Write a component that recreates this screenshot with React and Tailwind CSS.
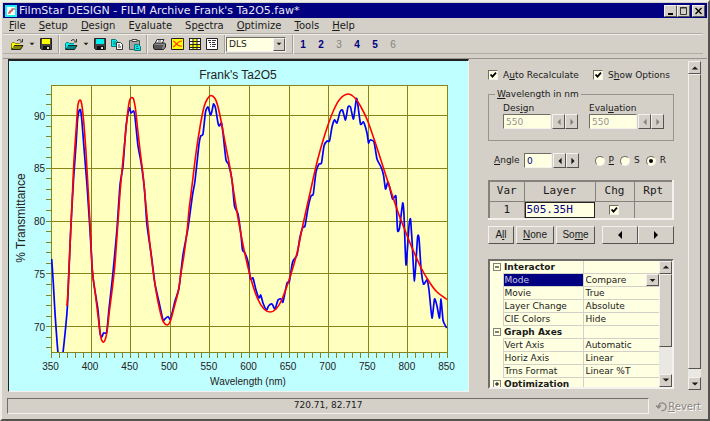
import React, { useState } from 'react';

const raised = 'border border-t-[#f4f2ee] border-l-[#f4f2ee] border-b-[#55534f] border-r-[#55534f] bg-[#d4d0c8]';
const sunken = 'border border-t-[#6f6d69] border-l-[#6f6d69] border-b-[#f4f2ee] border-r-[#f4f2ee]';

// Label with its accelerator letter underlined
const Hot = ({ text, at }) => (
  <span>
    {text.slice(0, at)}
    <span className="underline underline-offset-1">{text[at]}</span>
    {text.slice(at + 1)}
  </span>
);

const arrows = {
  left: 'M7 1v8L3 5z',
  right: 'M3 1v8l4-4z',
  up: 'M1 7h8L5 3z',
  down: 'M1 3h8L5 7z',
};

const Arrow = ({ dir, className = 'h-2 w-2' }) => (
  <svg viewBox="0 0 10 10" className={className} fill="currentColor" aria-hidden="true">
    <path d={arrows[dir]} />
  </svg>
);

const menus = [
  ['File', 0],
  ['Setup', 0],
  ['Design', 0],
  ['Evaluate', 1],
  ['Spectra', 2],
  ['Optimize', 0],
  ['Tools', 0],
  ['Help', 0],
];

const OpenIcon = ({ color, shade }) => (
  <svg viewBox="0 0 14 13" className="h-[13px] w-[14px]" aria-hidden="true">
    <path d="M1.500 11V5.500l1-1h2l1 1h4V8" fill={color} stroke={shade} />
    <path d="M1.500 11.500L4 7.500h9l-2.500 4z" fill={shade} stroke="#222" />
    <path d="M2.500 10L4 6.500h6" fill="none" stroke={color} />
    <path d="M7 3c1-1.800 3-1.800 4.500 0M12.500 1v3H10" fill="none" stroke="#333" />
  </svg>
);

const SaveIcon = ({ color }) => (
  <svg viewBox="0 0 12 12" className="h-3 w-3" aria-hidden="true">
    <path d="M.5.500h11v11h-10l-1-1z" fill="#444" stroke="#222" />
    <path d="M2 1h8v5H2z" fill={color} />
    <path d="M3 8h7v4H3z" fill="#111" />
    <path d="M7 9h2v2H7z" fill="#ddd" />
  </svg>
);

const CopyIcon = () => (
  <svg viewBox="0 0 14 12" className="h-3 w-[14px]" aria-hidden="true">
    <path d="M1.500 1.500h4l2 2v5h-6z" fill="#0ee" stroke="#177" />
    <path d="M3 4h3M3 6h3" stroke="#177" />
    <path d="M6.500 4.500h4l2 2v5h-6z" fill="#fff" stroke="#333" />
    <path d="M8 7h2M8 9h3" stroke="#333" />
  </svg>
);

const PasteIcon = () => (
  <svg viewBox="0 0 14 13" className="h-[13px] w-[14px]" aria-hidden="true">
    <path d="M1.500 2.500h10v9h-10z" fill="#a8a6a0" stroke="#455" />
    <path d="M4 1.500h5v2H4z" fill="#eee" stroke="#444" />
    <path d="M6.500 6.500h4l2 2v4h-6z" fill="#0ee" stroke="#177" />
    <path d="M8 8.500h2M8 10.500h3" stroke="#177" />
  </svg>
);

const PrintIcon = () => (
  <svg viewBox="0 0 14 13" className="h-[13px] w-[14px]" aria-hidden="true">
    <path d="M5 1.500h7l-2 4H3z" fill="#fff" stroke="#333" />
    <path d="M1.500 6.500l2-1.500h9l1 1v3l-2 2.500h-9l-1-1.500z" fill="#888" stroke="#222" />
    <path d="M2 8h9M2 10h8" stroke="#222" />
    <path d="M6 3h3" stroke="#555" />
  </svg>
);

const GraphIcon = () => (
  <svg viewBox="0 0 13 12" className="h-3 w-[13px]" aria-hidden="true">
    <path d="M.5.500h12v11H.5z" fill="#ff0" stroke="#222" />
    <path d="M2 3c3 0 3 6 9 5M2 9c3-1 4-6 9-6" fill="none" stroke="#f40" strokeWidth="1.200" />
  </svg>
);

const GridIcon = () => (
  <svg viewBox="0 0 12 12" className="h-3 w-3" aria-hidden="true">
    <path d="M.5.500h11v11H.5z" fill="#fff" stroke="#222" />
    <path d="M4 0h4v12H4zM0 6h12v4H0z" fill="#ff0" />
    <path d="M.5 0v12M11.500 0v12M4 0v12M8 0v12M0 .5h12M0 3.500h12M0 6.500h12M0 9.500h12M0 11.500h12" stroke="#222" />
  </svg>
);

const ReportIcon = () => (
  <svg viewBox="0 0 12 12" className="h-3 w-3" aria-hidden="true">
    <path d="M.5.500h11v11H.5z" fill="#fff" stroke="#222" />
    <path d="M2 2.500h3M6 2.500h4M3 4.500h2M6 4.500h3M4 6.500h1M6 6.500h4M4 8.500h1M6 8.500h3" stroke="#333" />
  </svg>
);

const ToolButton = ({ label, className = '', children }) => (
  <button type="button" aria-label={label} className={`flex items-center justify-center ${className}`}>
    {children}
  </button>
);

const Divider = () => <div className="h-[19px] w-0.5 border-l border-[#a5a29c] border-r border-r-[#efede8]" />;

const Spinner = ({ name }) => (
  <div className="ml-px flex">
    <button type="button" aria-label={`Decrease ${name}`} className={`${raised} flex h-[15px] w-[13px] items-center justify-center disabled:text-[#85827c]`} disabled={name !== 'angle'}>
      <Arrow dir="left" />
    </button>
    <button type="button" aria-label={`Increase ${name}`} className={`${raised} flex h-[15px] w-[13px] items-center justify-center disabled:text-[#85827c]`} disabled={name !== 'angle'}>
      <Arrow dir="right" />
    </button>
  </div>
);

const CheckBox = ({ label, ...props }) => (
  <span className="relative flex h-[10px] w-[10px]">
    <input
      type="checkbox"
      aria-label={label}
      defaultChecked
      className={`${sunken} peer h-[10px] w-[10px] appearance-none bg-[#ffffe1]`}
      {...props}
    />
    <svg viewBox="0 0 10 10" className="pointer-events-none absolute inset-0 hidden h-[10px] w-[10px] peer-checked:block" aria-hidden="true">
      <path d="M2.500 4.500l2 2.200 3.500-4" fill="none" stroke="#000" strokeWidth="1.800" />
    </svg>
  </span>
);

const calculated = [
  [67, 306], [68, 290], [71, 225], [72.7, 188], [74, 160], [76.3, 127], [77.7, 107], [79, 101], [80, 100],
  [81, 101], [82.3, 108], [84, 125], [86, 152], [88, 187], [90.3, 229], [92.3, 270], [95, 291], [98.5, 320],
  [101, 338], [103, 342], [105, 340], [107, 332], [109.3, 312], [112, 291], [114.7, 267],
  [117.5, 229], [120, 193], [123, 160], [125.7, 132], [128, 110], [129.7, 100], [131.7, 97.5], [133.5, 99],
  [135.5, 109], [137, 123], [140, 150], [143.3, 177], [145.7, 203], [148.3, 229], [151.7, 260], [154.3, 280],
  [157.3, 298], [161, 315], [163.5, 322], [167, 325], [170, 322], [174, 308], [178.3, 291],
  [181, 273], [184, 255], [187.3, 229], [189, 210], [192.7, 180], [196, 153], [200, 127], [204, 107],
  [207.3, 99], [211, 95.5], [215, 98.5], [217.5, 105], [220.7, 119], [225, 142], [230, 168], [235.3, 202],
  [240, 229], [244.3, 251], [250.7, 278], [257.3, 298], [264, 309], [270.3, 312], [276, 309], [281.7, 300],
  [290, 277], [297.3, 252], [302, 229], [310, 193], [317.3, 161], [325, 134], [333.3, 111], [340, 99],
  [348, 94], [355, 98], [361, 107], [367.7, 121], [376.7, 147], [388.3, 183], [398.3, 213], [404.5, 229],
  [411.7, 247], [421.7, 269], [430, 283], [437, 292], [447, 299.5],
];

const measured = [
  [51.7, 259], [53.3, 283], [55, 313], [57.3, 345], [59, 360], [62, 360], [65.7, 327], [67.5, 305], [69, 270],
  [70.7, 230], [73.5, 180], [76, 145], [77.5, 120], [79, 111], [80.5, 110], [82, 122], [84, 148], [87, 185],
  [90, 230], [92.3, 270], [94, 285], [98, 310], [100, 333], [102, 337], [103.5, 333], [106.7, 332], [109, 309],
  [112, 282], [114, 262], [117, 229], [120, 185], [123, 166], [126, 127], [129.3, 108], [131, 113], [133.7, 111],
  [135, 117], [138, 146], [141, 162], [144.5, 190], [147, 225], [151.7, 258], [155, 284], [159, 302], [163, 320],
  [165, 319], [168, 316.5], [170.5, 319], [175, 301], [179, 288], [183, 255], [188, 228], [192.5, 195],
  [195, 181], [199, 144], [200.7, 136], [203, 134], [205.5, 112], [208, 107], [210.5, 115], [212, 111],
  [213.5, 104], [215.5, 108], [218, 123], [219.5, 126], [221.5, 123], [223, 133], [226, 160], [228.5, 164],
  [232, 180], [234.5, 206], [238, 214], [241, 235], [242.5, 250], [245, 253], [248, 262], [250.5, 279],
  [253, 278], [256, 290], [259, 298], [260.7, 295], [263, 303], [266.5, 310], [268.5, 306], [272, 304],
  [275, 309], [278, 300], [281, 299], [283, 302], [287, 283], [289.3, 282], [292, 265], [293.5, 260],
  [297, 255], [300, 237], [303, 227], [305, 226], [308, 208], [311, 196], [313.3, 194], [316, 172],
  [319, 164], [321.5, 163], [324, 146], [327, 141], [329.5, 141], [332, 127], [334.5, 120], [337, 123],
  [340, 112], [342.5, 110], [345.5, 120], [348, 107], [350.5, 107], [353.5, 119], [356.3, 99], [357.5, 102],
  [360.5, 124], [363.5, 122], [367, 133], [368.5, 143], [370, 140], [374, 142], [377, 159], [381, 167],
  [383.5, 175], [385.5, 189], [388, 182], [391, 193], [392.5, 199], [394.5, 197], [396, 197], [397.5, 230],
  [399.5, 228], [402.7, 203], [404, 215], [406, 265], [409, 226], [410.5, 219], [412, 240], [414.5, 281],
  [417.5, 238], [419, 238], [421, 268], [423.5, 284], [427, 280], [429, 290], [432, 318], [434.5, 299],
  [437, 306], [439.5, 318], [441, 299], [443, 320], [445, 325], [446.7, 328],
];

// Smooth path through all points; higher tension gives rounder bends
const toPath = (data, tension) => {
  let d = `M${data[0]}`;
  for (let i = 0; i < data.length - 1; i++) {
    const p0 = data[i - 1] || data[i];
    const p1 = data[i];
    const p2 = data[i + 1];
    const p3 = data[i + 2] || p2;
    d += `C${p1[0] + (p2[0] - p0[0]) * tension},${p1[1] + (p2[1] - p0[1]) * tension}`;
    d += ` ${p2[0] - (p3[0] - p1[0]) * tension},${p2[1] - (p3[1] - p1[1]) * tension} ${p2[0]},${p2[1]}`;
  }
  return d;
};

const Chart = () => {
  const px = (nm) => 51.5 + (nm - 350) * 0.792;
  const py = (t) => 115.5 + (90 - t) * 10.56;
  const wavelengths = Array.from({ length: 11 }, (_, i) => 350 + i * 50);
  const xTicks = Array.from({ length: 51 }, (_, i) => 350 + i * 10);
  const yTicks = Array.from({ length: 25 }, (_, i) => 68 + i);

  return (
    <svg viewBox="9 61 459 330" className="h-full w-full" role="img" aria-label="Frank's Ta2O5" fontFamily="'Liberation Sans', sans-serif" fill="#222">
      <clipPath id="plot">
        <rect x="51" y="85" width="397" height="267" />
      </clipPath>
      <rect x="51.500" y="85.500" width="396" height="267" fill="#ffffc0" />
      <g stroke="#85851a" strokeWidth="1" shapeRendering="crispEdges">
        {wavelengths.map((nm) => (
          <line key={nm} x1={px(nm)} x2={px(nm)} y1="85" y2="358" />
        ))}
        {[90, 85, 80, 75, 70].map((t) => (
          <line key={t} x1="46" x2="447.500" y1={py(t)} y2={py(t)} />
        ))}
        {xTicks.map((nm) => (
          <line key={nm} x1={px(nm)} x2={px(nm)} y1="353" y2="358" />
        ))}
        {yTicks.map((t) => (
          <line key={t} x1="46" x2="51" y1={py(t)} y2={py(t)} />
        ))}
        <rect x="51.500" y="85.500" width="396" height="267" fill="none" />
      </g>
      <g clipPath="url(#plot)" fill="none" strokeLinejoin="round">
        <path d={toPath(measured, 0.1)} stroke="#0000ff" strokeWidth="1.700" />
        <path d={toPath(calculated, 0.16)} stroke="#ff0000" strokeWidth="1.600" />
      </g>
      <text x="238" y="79" fontSize="12" textAnchor="middle">Frank's Ta2O5</text>
      {wavelengths.map((nm) => (
        <text key={nm} x={px(nm) - 1} y="370" fontSize="10" textAnchor="middle">{nm}</text>
      ))}
      {[90, 85, 80, 75, 70].map((t) => (
        <text key={t} x="45" y={py(t) + 4} fontSize="10" textAnchor="end">{t}</text>
      ))}
      <text x="248" y="385" fontSize="10" textAnchor="middle">Wavelength (nm)</text>
      <text transform="translate(25 218) rotate(-90)" fontSize="12" textAnchor="middle">% Transmittance</text>
    </svg>
  );
};

const properties = [
  { name: 'Interactor', group: '−' },
  { name: 'Mode', value: 'Compare', selected: true },
  { name: 'Movie', value: 'True' },
  { name: 'Layer Change', value: 'Absolute' },
  { name: 'CIE Colors', value: 'Hide' },
  { name: 'Graph Axes', group: '−' },
  { name: 'Vert Axis', value: 'Automatic' },
  { name: 'Horiz Axis', value: 'Linear' },
  { name: 'Trns Format', value: 'Linear %T' },
  { name: 'Optimization', group: '+' },
];

const PropertyGrid = () => (
  <div className={`${sunken} flex h-[130px] overflow-hidden border-2 bg-[#ffffe1]`}>
    <table className="w-full table-fixed border-collapse self-start">
      <colgroup>
        <col className="w-[13px]" />
        <col className="w-[80px]" />
        <col />
      </colgroup>
      <tbody>
        {properties.map((p) => (
          <tr key={p.name} className="h-[13px]">
            <td className="p-0">
              {p.group && (
                <button type="button" aria-label={`Toggle ${p.name}`} className="mx-auto flex h-2 w-2 items-center justify-center border border-[#85827c]">
                  <svg viewBox="0 0 6 6" className="h-1.5 w-1.5" aria-hidden="true">
                    <path d={p.group === '+' ? 'M1 3h4M3 1v4' : 'M1 3h4'} stroke="#000" />
                  </svg>
                </button>
              )}
            </td>
            <th
              scope="row"
              className={`border border-t-0 border-[#d4d0c8] p-0 pl-px text-left leading-3 whitespace-nowrap ${p.group ? 'border-l-0 font-bold' : 'font-normal'} ${p.selected ? 'bg-[#000080] text-[#c8c8e0]' : ''}`}
            >
              {p.name}
            </th>
            <td className="border-b border-[#d4d0c8] p-0 pl-0.5 leading-3 whitespace-nowrap">
              {p.selected ? (
                <div className="relative flex h-3">
                  <select aria-label={p.name} className="w-full appearance-none leading-3">
                    <option>{p.value}</option>
                  </select>
                  <span className={`${raised} pointer-events-none absolute inset-y-0 right-0 flex w-[13px] items-center justify-center`}>
                    <Arrow dir="down" className="h-[7px] w-[7px]" />
                  </span>
                </div>
              ) : (
                p.value
              )}
            </td>
          </tr>
        ))}
      </tbody>
    </table>
    <div className="flex w-[13px] shrink-0 flex-col bg-[#eae8e3]">
      <button type="button" aria-label="Scroll up" className={`${raised} flex h-[13px] items-center justify-center`}>
        <Arrow dir="up" />
      </button>
      <div className={`${raised} h-[73px]`} />
      <button type="button" aria-label="Scroll down" className={`${raised} mt-auto flex h-[13px] items-center justify-center`}>
        <Arrow dir="down" />
      </button>
    </div>
  </div>
);

const Controls = () => {
  const [polarization, setPolarization] = useState('R');

  return (
    <div className="flex w-[186px] shrink-0 flex-col pt-2.5 text-[9px]">
      <div className="flex justify-between pr-1">
        <label className="flex items-center gap-[5px] leading-3">
          <CheckBox />
          <Hot text="Auto Recalculate" at={1} />
        </label>
        <label className="flex items-center gap-[5px] leading-3">
          <CheckBox />
          <Hot text="Show Options" at={1} />
        </label>
      </div>

      <fieldset className="mt-[7px] flex gap-[11px] border border-[#97948e] pt-0.5 pr-2 pb-[11px] pl-3.5">
        <legend className="-ml-2 px-0.5 leading-3">
          <Hot text="Wavelength in nm" at={0} />
        </legend>
        {[['Design', 3], ['Evaluation', 4]].map(([name, at]) => (
          <div key={name}>
            <label htmlFor={name} className="block leading-3">
              <Hot text={name} at={at} />
            </label>
            <div className="flex">
              <input id={name} defaultValue="550" disabled className={`${sunken} h-[15px] w-12 bg-[#ffffe1] px-0.5 text-[#97948e]`} />
              <Spinner name={name} />
            </div>
          </div>
        ))}
      </fieldset>

      <div className="mt-3 flex items-center pl-1.5">
        <label htmlFor="angle" className="w-[30px]">
          <Hot text="Angle" at={0} />
        </label>
        <input id="angle" defaultValue="0" className={`${sunken} h-[15px] w-7 bg-[#ffffe1] px-0.5 text-[#000080]`} />
        <Spinner name="angle" />
        <div className="ml-auto flex gap-1.5 pr-2">
          {['P', 'S', 'R'].map((p) => (
            <label key={p} className="flex items-center gap-1">
              <span className="relative flex">
                <input
                  type="radio"
                  name="polarization"
                  checked={polarization === p}
                  onChange={() => setPolarization(p)}
                  className={`${sunken} peer h-[10px] w-[10px] appearance-none rounded-full bg-[#ffffe1]`}
                />
                <span className="pointer-events-none absolute inset-[3px] hidden rounded-full bg-black peer-checked:block" />
              </span>
              <span className={p === 'P' ? 'underline' : ''}>{p}</span>
            </label>
          ))}
        </div>
      </div>

      <table className="mt-3 w-full table-fixed border-2 border-[#85827c] border-r-[#f4f2ee] border-b-[#f4f2ee] font-['DejaVu_Sans_Mono',monospace] text-[11px] leading-3">
        <colgroup>
          <col className="w-[35px]" />
          <col />
          <col className="w-[39px]" />
          <col className="w-[39px]" />
        </colgroup>
        <thead>
          <tr className="h-5">
            {['Var', 'Layer', 'Chg', 'Rpt'].map((h) => (
              <th key={h} className="border border-t-0 border-l-0 border-[#85827c] p-0 font-normal">{h}</th>
            ))}
          </tr>
        </thead>
        <tbody>
          <tr className="h-4">
            <td className="border-r border-[#85827c] p-0 text-center">1</td>
            <td className="p-0">
              <input aria-label="Layer 1" defaultValue="505.35H" className="block h-4 w-full border border-[#222] bg-[#ffffe1] px-px text-[#000080]" />
            </td>
            <td className="border-r border-[#85827c] p-0">
              <div className="flex justify-center">
                <CheckBox label="Change layer 1" />
              </div>
            </td>
            <td className="p-0" />
          </tr>
        </tbody>
      </table>

      <div className="mt-1.5 flex gap-0.5 font-['Liberation_Sans',sans-serif] text-[10px]">
        {[['All', 1, 'w-[26px]'], ['None', 0, 'w-[38px]'], ['Some', 2, 'w-[39px]']].map(([name, at, width]) => (
          <button key={name} type="button" className={`${raised} ${width} h-[18px] leading-3`}>
            <Hot text={name} at={at} />
          </button>
        ))}
        <div className="ml-auto flex">
          <button type="button" aria-label="Previous" className={`${raised} flex h-[18px] w-9 items-center justify-center text-black`}>
            <Arrow dir="left" className="h-2.5 w-2.5" />
          </button>
          <button type="button" aria-label="Next" className={`${raised} flex h-[18px] w-9 items-center justify-center text-black`}>
            <Arrow dir="right" className="h-2.5 w-2.5" />
          </button>
        </div>
      </div>

      <div className="mt-[15px]">
        <PropertyGrid />
      </div>
    </div>
  );
};

const App = () => (
  <div className="flex min-h-screen flex-col border-2 border-t-[#efede8] border-r-[#55534f] border-b-[#55534f] border-l-[#efede8] bg-[#d4d0c8] p-px font-['DejaVu_Sans',sans-serif] text-[10px] text-[#1a1a1a]">
    <header className="flex h-[15px] items-center gap-0.5 bg-[#000080] pr-0.5 pl-0.5 text-[#e8e8f4]">
      <svg viewBox="0 0 12 12" className="h-3 w-3" aria-hidden="true">
        <path d="M0 0h12v12H0z" fill="#2ee" />
        <path d="M2 2h8v8H2z" fill="#fff" />
        <path d="M3 8h2V6h2V4h3" fill="none" stroke="#b22" strokeWidth="1.200" />
      </svg>
      <h1 className="text-[11px] leading-3">FilmStar DESIGN - FILM Archive Frank's Ta2O5.faw*</h1>
      <div className="ml-auto flex text-black">
        <button type="button" aria-label="Minimize" className={`${raised} h-3 w-[13px]`}>
          <svg viewBox="0 0 11 10" className="h-2.5 w-[11px]" aria-hidden="true"><path d="M3 8h5" stroke="#000" strokeWidth="2" /></svg>
        </button>
        <button type="button" aria-label="Maximize" className={`${raised} mr-0.5 h-3 w-[13px]`}>
          <svg viewBox="0 0 11 10" className="h-2.5 w-[11px]" aria-hidden="true"><path d="M2.500 1.500h6v7h-6zM2 2h7" fill="none" stroke="#333" /></svg>
        </button>
        <button type="button" aria-label="Close" className={`${raised} h-3 w-[13px]`}>
          <svg viewBox="0 0 11 10" className="h-2.5 w-[11px]" aria-hidden="true"><path d="M2.500 2l6 6M8.500 2l-6 6" stroke="#000" strokeWidth="1.400" /></svg>
        </button>
      </div>
    </header>

    <nav className="mr-1 flex h-4 items-center gap-[13px] border-b border-[#b0ada6] pl-1.5">
      {menus.map(([name, at]) => (
        <button key={name} type="button" className="leading-3">
          <Hot text={name} at={at} />
        </button>
      ))}
    </nav>

    <div className="mr-1 flex h-5 items-center border-t border-b border-t-[#efede8] border-b-[#b0ada6] pl-[7px]">
      <ToolButton label="Open design"><OpenIcon color="#ff0" shade="#8a8a00" /></ToolButton>
      <ToolButton label="Recent designs" className="w-4"><Arrow dir="down" className="h-1.5 w-1.5" /></ToolButton>
      <ToolButton label="Save design" className="mr-1.5"><SaveIcon color="#ff0" /></ToolButton>
      <Divider />
      <ToolButton label="Open spectrum" className="ml-1"><OpenIcon color="#0ee" shade="#088" /></ToolButton>
      <ToolButton label="Recent spectra" className="w-4"><Arrow dir="down" className="h-1.5 w-1.5" /></ToolButton>
      <ToolButton label="Save spectrum"><SaveIcon color="#0ee" /></ToolButton>
      <ToolButton label="Copy" className="ml-1"><CopyIcon /></ToolButton>
      <ToolButton label="Paste" className="mr-1 ml-1"><PasteIcon /></ToolButton>
      <Divider />
      <div className="mr-1.5 ml-1 flex gap-[5px]">
        <ToolButton label="Print"><PrintIcon /></ToolButton>
        <ToolButton label="Graph"><GraphIcon /></ToolButton>
        <ToolButton label="Spreadsheet"><GridIcon /></ToolButton>
        <ToolButton label="Report"><ReportIcon /></ToolButton>
      </div>
      <Divider />
      <div className="relative mr-1.5 flex">
        <select aria-label="Optimization method" className={`${sunken} h-[15px] w-[60px] appearance-none bg-[#ffffe1] pl-0.5 text-[9px]`}>
          <option>DLS</option>
        </select>
        <span className={`${raised} pointer-events-none absolute inset-y-px right-px flex w-3 items-center justify-center`}>
          <Arrow dir="down" className="h-1.5 w-1.5" />
        </span>
      </div>
      <Divider />
      <div className="flex font-['Liberation_Sans',sans-serif] font-bold text-[#000080]">
        {[1, 2, 3, 4, 5, 6].map((n) => (
          <button key={n} type="button" disabled={n % 3 === 0} className="w-[18px] disabled:font-normal disabled:text-[#85827c]">
            {n}
          </button>
        ))}
      </div>
    </div>

    <main className="mt-1 flex flex-1 border-t border-[#97948e] pr-1.5 pl-[5px]">
      <div className="mr-[19px] min-w-0 flex-1 border border-t-2 border-[#222] border-r-[#f4f2ee] border-b-[#f4f2ee] bg-[#c0ffff]">
        <Chart />
      </div>
      <Controls />
      <div className="mt-0.5 mb-0.5 ml-3.5 flex w-[13px] flex-col bg-[#eae8e3]">
        <button type="button" aria-label="Scroll panel up" className={`${raised} flex h-[13px] items-center justify-center`}>
          <Arrow dir="up" />
        </button>
        <div className={`${raised} flex-1`} />
        <button type="button" aria-label="Scroll panel down" className={`${raised} mt-2 flex h-[13px] items-center justify-center`}>
          <Arrow dir="down" />
        </button>
      </div>
    </main>

    <footer className="mt-1.5 mb-1 flex h-4 items-center pr-1.5 pl-1 text-[9px]">
      <div className={`${sunken} mr-1.5 flex h-4 flex-1 items-center justify-center`}>720.71, 82.717</div>
      <button type="button" disabled className="flex items-center text-[10px] text-[#8a8780] [text-shadow:1px_1px_0_#fff]">
        <svg viewBox="0 0 13 11" className="h-[11px] w-[13px]" aria-hidden="true">
          <path d="M3.500 7V5a3.800 3.800 0 1 1 3 4.500M1 4.500L3.500 7 6 4.500" fill="none" stroke="currentColor" strokeWidth="1.300" />
        </svg>
        <Hot text="Revert" at={0} />
      </button>
    </footer>
  </div>
);

export default App;
